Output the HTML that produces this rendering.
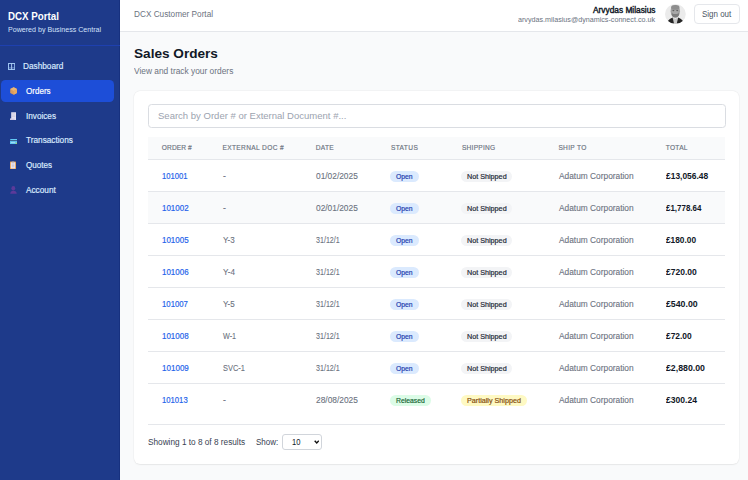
<!DOCTYPE html><html><head><meta charset="utf-8"><style>
*{margin:0;padding:0;box-sizing:border-box}
html,body{width:748px;height:480px;overflow:hidden;background:#f9fafb;font-family:"Liberation Sans",sans-serif;position:relative}
.t{position:absolute;white-space:nowrap;line-height:1;transform-origin:0 0}
.b{position:absolute}
</style></head><body>
<div class="b" style="left:0;top:0;width:120px;height:480px;background:#1e3a8a"></div>
<div class="b" style="left:119px;top:0;width:1px;height:480px;background:#17317f"></div>
<div class="b" style="left:0;top:45px;width:120px;height:1px;background:#1e40af"></div>
<div class="b" style="left:1px;top:79.9px;width:112.6px;height:21.8px;background:#1d4ed8;border-radius:4.5px"></div>
<div class="b" style="left:120px;top:0;width:628px;height:31px;background:#fff"></div>
<div class="b" style="left:120px;top:31px;width:628px;height:1px;background:#e5e7eb"></div>
<svg class="b" style="left:665px;top:4px" width="21" height="20" viewBox="0 0 21 20">
<defs><clipPath id="cc"><ellipse cx="10.4" cy="10" rx="10.4" ry="10"/></clipPath></defs>
<ellipse cx="10.4" cy="10" rx="10.4" ry="10" fill="#ebebeb"/>
<g clip-path="url(#cc)">
<path d="M3 20 L3.2 16.8 Q5 14.6 8 13.6 L10.4 15 L12.8 13.6 Q15.8 14.6 17.6 16.8 L17.8 20 Z" fill="#c9c9c9"/>
<path d="M2.6 17.2 Q4.6 14.6 7.6 13.6 L9 19.5 L5 19.5 Z" fill="#262626"/>
<path d="M18.2 17.2 Q16.2 14.6 13.2 13.6 L11.8 19.5 L15.8 19.5 Z" fill="#262626"/>
<ellipse cx="10.3" cy="7.2" rx="4.7" ry="6.3" fill="#a3a3a3"/>
<ellipse cx="10.3" cy="3.4" rx="4.2" ry="2.4" fill="#8e8e8e"/>
<ellipse cx="10.3" cy="10.6" rx="3.6" ry="2.8" fill="#7d7d7d"/>
<ellipse cx="10.3" cy="8.2" rx="3.3" ry="1.9" fill="#a8a8a8"/>
<ellipse cx="8.4" cy="6.6" rx="1" ry="0.6" fill="#5a5a5a"/>
<ellipse cx="12.2" cy="6.6" rx="1" ry="0.6" fill="#5a5a5a"/>
</g></svg>
<div class="b" style="left:694px;top:4px;width:46px;height:20px;border:1px solid #e5e7eb;border-radius:4px;background:#fff"></div>
<div class="b" style="left:134.4px;top:90.5px;width:604.6px;height:373.5px;background:#fff;border-radius:6px;box-shadow:0 0 0 0.5px rgba(0,0,0,0.04),0 0.5px 1.5px rgba(0,0,0,0.06)"></div>
<div class="b" style="left:148px;top:104px;width:578px;height:24px;border:1px solid #dadde2;border-radius:3.5px;background:#fff"></div>
<div class="b" style="left:148px;top:136.5px;width:576.8px;height:22.7px;background:#f9fafb"></div>
<div class="b" style="left:148px;top:159.2px;width:576.8px;height:1px;background:#e5e7eb"></div>
<div class="b" style="left:148px;top:191.20px;width:576.8px;height:1px;background:#e5e7eb"></div>
<div class="b" style="left:148px;top:192.20px;width:576.8px;height:31.00px;background:#f9fafb"></div>
<div class="b" style="left:148px;top:223.20px;width:576.8px;height:1px;background:#e5e7eb"></div>
<div class="b" style="left:148px;top:255.20px;width:576.8px;height:1px;background:#e5e7eb"></div>
<div class="b" style="left:148px;top:287.20px;width:576.8px;height:1px;background:#e5e7eb"></div>
<div class="b" style="left:148px;top:319.20px;width:576.8px;height:1px;background:#e5e7eb"></div>
<div class="b" style="left:148px;top:351.20px;width:576.8px;height:1px;background:#e5e7eb"></div>
<div class="b" style="left:148px;top:383.20px;width:576.8px;height:1px;background:#e5e7eb"></div>
<div class="b" style="left:148px;top:424.2px;width:576.8px;height:1px;background:#e5e7eb"></div>
<div class="b" style="left:390.0px;top:170.80px;width:28.90px;height:11.20px;background:#dbeafe;border-radius:6px"></div>
<div class="b" style="left:461.2px;top:170.80px;width:51.10px;height:11.20px;background:#f3f4f6;border-radius:6px"></div>
<div class="b" style="left:390.0px;top:202.80px;width:28.90px;height:11.20px;background:#dbeafe;border-radius:6px"></div>
<div class="b" style="left:461.2px;top:202.80px;width:51.10px;height:11.20px;background:#f3f4f6;border-radius:6px"></div>
<div class="b" style="left:390.0px;top:234.80px;width:28.90px;height:11.20px;background:#dbeafe;border-radius:6px"></div>
<div class="b" style="left:461.2px;top:234.80px;width:51.10px;height:11.20px;background:#f3f4f6;border-radius:6px"></div>
<div class="b" style="left:390.0px;top:266.80px;width:28.90px;height:11.20px;background:#dbeafe;border-radius:6px"></div>
<div class="b" style="left:461.2px;top:266.80px;width:51.10px;height:11.20px;background:#f3f4f6;border-radius:6px"></div>
<div class="b" style="left:390.0px;top:298.80px;width:28.90px;height:11.20px;background:#dbeafe;border-radius:6px"></div>
<div class="b" style="left:461.2px;top:298.80px;width:51.10px;height:11.20px;background:#f3f4f6;border-radius:6px"></div>
<div class="b" style="left:390.0px;top:330.80px;width:28.90px;height:11.20px;background:#dbeafe;border-radius:6px"></div>
<div class="b" style="left:461.2px;top:330.80px;width:51.10px;height:11.20px;background:#f3f4f6;border-radius:6px"></div>
<div class="b" style="left:390.0px;top:362.80px;width:28.90px;height:11.20px;background:#dbeafe;border-radius:6px"></div>
<div class="b" style="left:461.2px;top:362.80px;width:51.10px;height:11.20px;background:#f3f4f6;border-radius:6px"></div>
<div class="b" style="left:390.0px;top:394.80px;width:41.10px;height:11.20px;background:#dcfce7;border-radius:6px"></div>
<div class="b" style="left:461.2px;top:394.80px;width:65.80px;height:11.20px;background:#fef9c3;border-radius:6px"></div>
<div class="b" style="left:282px;top:434px;width:40px;height:16px;border:1px solid #d1d5db;border-radius:3px;background:#fff"></div>
<svg class="b" style="left:313.6px;top:439.6px" width="5.5" height="4.2" viewBox="0 0 5.5 4.2"><path d="M0.7 0.8 L2.75 3.0 L4.8 0.8" fill="none" stroke="#111" stroke-width="1.4"/></svg>
<svg class="b" style="left:7.9px;top:62.9px" width="7.2" height="7" viewBox="0 0 7.2 7">
<rect x="0.5" y="0.5" width="6.2" height="6" fill="none" stroke="#9cc3f0" stroke-width="1"/>
<line x1="3.6" y1="0.5" x2="3.6" y2="6.5" stroke="#b8d6f5" stroke-width="0.9"/>
<line x1="0.5" y1="4.9" x2="6.7" y2="4.9" stroke="#9cc3f0" stroke-width="0.6"/>
</svg>
<svg class="b" style="left:9.6px;top:87px" width="7.4" height="8" viewBox="0 0 7.4 8">
<path d="M3.7 0.3 L7.2 2.1 L7.2 6.0 L3.7 7.8 L0.2 6.0 L0.2 2.1 Z" fill="#d99a5b"/>
<path d="M0.2 2.1 L3.7 3.9 L7.2 2.1 L3.7 0.3 Z" fill="#eab677"/>
<path d="M3.7 3.9 L7.2 2.1 L7.2 6.0 L3.7 7.8 Z" fill="#e7a963"/>
</svg>
<svg class="b" style="left:9.9px;top:111.9px" width="6.3" height="8.3" viewBox="0 0 6.3 8.3">
<path d="M1.2 0.2 H6.1 V7.2 Q6.1 8.1 5.2 8.1 H0.2 V6.6 H1.2 Z" fill="#e6e3f2"/>
<path d="M0.2 6.6 H4.6 V8.1 H0.2 Z" fill="#cfc8e6"/>
<line x1="2" y1="1.8" x2="5.2" y2="1.8" stroke="#b9b4cc" stroke-width="0.4"/>
<line x1="2" y1="3.2" x2="5.2" y2="3.2" stroke="#b9b4cc" stroke-width="0.4"/>
<line x1="2" y1="4.6" x2="5.2" y2="4.6" stroke="#b9b4cc" stroke-width="0.4"/>
</svg>
<svg class="b" style="left:9.5px;top:138.8px" width="7.7" height="5.4" viewBox="0 0 7.7 5.4">
<rect x="0" y="0" width="7.7" height="5.4" rx="0.5" fill="#63c9f4"/>
<rect x="0" y="1.1" width="7.7" height="1.0" fill="#3a5b8a"/>
<rect x="1" y="3.1" width="4" height="0.6" fill="#c9e9f7"/>
<rect x="5.6" y="3.7" width="1.7" height="1.2" fill="#a6d36a"/>
</svg>
<svg class="b" style="left:10.1px;top:160.9px" width="6" height="8.2" viewBox="0 0 6 8.2">
<rect x="0" y="0.6" width="6" height="7.6" rx="0.6" fill="#eea048"/>
<rect x="0.8" y="1.3" width="4.4" height="6.2" fill="#ece8f5"/>
<rect x="1.8" y="0" width="2.4" height="1.3" fill="#8f8fa0"/>
<line x1="1.6" y1="3" x2="4.4" y2="3" stroke="#9a98ad" stroke-width="0.4"/>
<line x1="1.6" y1="4.4" x2="4.4" y2="4.4" stroke="#9a98ad" stroke-width="0.4"/>
<line x1="1.6" y1="5.8" x2="4.4" y2="5.8" stroke="#9a98ad" stroke-width="0.4"/>
</svg>
<svg class="b" style="left:9.9px;top:186.1px" width="7" height="7.7" viewBox="0 0 7 7.7">
<ellipse cx="3.3" cy="2.2" rx="1.9" ry="2.2" fill="#5c3a9a"/>
<path d="M0.2 7.7 Q0.4 5.0 3.3 4.8 Q6.6 5.0 6.8 7.7 Z" fill="#5c3a9a"/>
</svg>
<div class="t" style="left:8.39px;top:12.00px;font-size:10.0px;font-weight:bold;color:#ffffff;transform:scaleX(0.9742);">DCX Portal</div>
<div class="t" style="left:8.05px;top:26.00px;font-size:7.0px;color:#d3e2fb;transform:scaleX(1.0136);">Powered by Business Central</div>
<div class="t" style="left:22.66px;top:62.00px;font-size:8.3px;color:#dbeafe;transform:scaleX(0.9927);-webkit-text-stroke:0.18px currentColor;">Dashboard</div>
<div class="t" style="left:26.12px;top:87.00px;font-size:8.3px;color:#ffffff;transform:scaleX(0.9710);-webkit-text-stroke:0.18px currentColor;">Orders</div>
<div class="t" style="left:25.56px;top:112.00px;font-size:8.3px;color:#dbeafe;transform:scaleX(0.9851);-webkit-text-stroke:0.18px currentColor;">Invoices</div>
<div class="t" style="left:26.47px;top:136.00px;font-size:8.3px;color:#dbeafe;transform:scaleX(0.9932);-webkit-text-stroke:0.18px currentColor;">Transactions</div>
<div class="t" style="left:25.92px;top:161.00px;font-size:8.3px;color:#dbeafe;transform:scaleX(0.9766);-webkit-text-stroke:0.18px currentColor;">Quotes</div>
<div class="t" style="left:26.30px;top:186.00px;font-size:8.3px;color:#dbeafe;transform:scaleX(0.9927);-webkit-text-stroke:0.18px currentColor;">Account</div>
<div class="t" style="left:133.96px;top:10.00px;font-size:8.3px;color:#6b7280;transform:scaleX(0.9911);">DCX Customer Portal</div>
<div class="t" style="left:593.30px;top:6.00px;font-size:8.3px;color:#111827;transform:scaleX(1.0031);-webkit-text-stroke:0.4px currentColor;">Arvydas Milasius</div>
<div class="t" style="left:518.08px;top:16.00px;font-size:7.0px;color:#6b7280;transform:scaleX(1.0230);">arvydas.milasius@dynamics-connect.co.uk</div>
<div class="t" style="left:702.15px;top:10.00px;font-size:8.3px;color:#4b5563;transform:scaleX(0.9595);">Sign out</div>
<div class="t" style="left:134.19px;top:47.00px;font-size:13.4px;font-weight:bold;color:#111827;transform:scaleX(1.0155);">Sales Orders</div>
<div class="t" style="left:134.40px;top:67.00px;font-size:8.3px;color:#6b7280;transform:scaleX(1.0080);">View and track your orders</div>
<div class="t" style="left:157.50px;top:112.00px;font-size:9.3px;color:#9ca3af;transform:scaleX(1.0241);">Search by Order # or External Document #...</div>
<div class="t" style="left:161.84px;top:145.00px;font-size:6.6px;color:#6b7280;letter-spacing:0.105px;-webkit-text-stroke:0.15px currentColor;">ORDER #</div>
<div class="t" style="left:222.48px;top:145.00px;font-size:6.6px;color:#6b7280;letter-spacing:0.356px;-webkit-text-stroke:0.15px currentColor;">EXTERNAL DOC #</div>
<div class="t" style="left:315.68px;top:145.00px;font-size:6.6px;color:#6b7280;letter-spacing:0.293px;-webkit-text-stroke:0.15px currentColor;">DATE</div>
<div class="t" style="left:390.89px;top:145.00px;font-size:6.6px;color:#6b7280;letter-spacing:0.385px;-webkit-text-stroke:0.15px currentColor;">STATUS</div>
<div class="t" style="left:461.99px;top:145.00px;font-size:6.6px;color:#6b7280;letter-spacing:0.237px;-webkit-text-stroke:0.15px currentColor;">SHIPPING</div>
<div class="t" style="left:558.39px;top:145.00px;font-size:6.6px;color:#6b7280;letter-spacing:0.335px;-webkit-text-stroke:0.15px currentColor;">SHIP TO</div>
<div class="t" style="left:665.70px;top:145.00px;font-size:6.6px;color:#6b7280;letter-spacing:0.302px;-webkit-text-stroke:0.15px currentColor;">TOTAL</div>
<div class="t" style="left:161.72px;top:172.00px;font-size:8.3px;color:#2563eb;transform:scaleX(0.9202);-webkit-text-stroke:0.18px currentColor;">101001</div>
<div class="t" style="left:222.93px;top:172.00px;font-size:8.3px;color:#6b7280;transform:scaleX(1.0432);-webkit-text-stroke:0.1px currentColor;">-</div>
<div class="t" style="left:316.14px;top:172.00px;font-size:8.3px;color:#6b7280;transform:scaleX(1.0062);-webkit-text-stroke:0.1px currentColor;">01/02/2025</div>
<div class="t" style="left:558.60px;top:172.00px;font-size:8.3px;color:#6b7280;transform:scaleX(1.0053);-webkit-text-stroke:0.1px currentColor;">Adatum Corporation</div>
<div class="t" style="left:666.00px;top:172.00px;font-size:8.3px;font-weight:bold;color:#111827;transform:scaleX(1.0161);">£13,056.48</div>
<div class="t" style="left:396.48px;top:174.00px;font-size:6.6px;color:#1e40af;transform:scaleX(1.0281);-webkit-text-stroke:0.18px currentColor;">Open</div>
<div class="t" style="left:466.84px;top:174.00px;font-size:6.6px;color:#1f2937;transform:scaleX(1.0920);-webkit-text-stroke:0.18px currentColor;">Not Shipped</div>
<div class="t" style="left:161.70px;top:204.00px;font-size:8.3px;color:#2563eb;transform:scaleX(0.9612);-webkit-text-stroke:0.18px currentColor;">101002</div>
<div class="t" style="left:222.93px;top:204.00px;font-size:8.3px;color:#6b7280;transform:scaleX(1.0432);-webkit-text-stroke:0.1px currentColor;">-</div>
<div class="t" style="left:316.14px;top:204.00px;font-size:8.3px;color:#6b7280;transform:scaleX(1.0062);-webkit-text-stroke:0.1px currentColor;">02/01/2025</div>
<div class="t" style="left:558.60px;top:204.00px;font-size:8.3px;color:#6b7280;transform:scaleX(1.0053);-webkit-text-stroke:0.1px currentColor;">Adatum Corporation</div>
<div class="t" style="left:666.00px;top:204.00px;font-size:8.3px;font-weight:bold;color:#111827;transform:scaleX(0.9573);">£1,778.64</div>
<div class="t" style="left:396.48px;top:206.00px;font-size:6.6px;color:#1e40af;transform:scaleX(1.0281);-webkit-text-stroke:0.18px currentColor;">Open</div>
<div class="t" style="left:466.84px;top:206.00px;font-size:6.6px;color:#1f2937;transform:scaleX(1.0920);-webkit-text-stroke:0.18px currentColor;">Not Shipped</div>
<div class="t" style="left:161.70px;top:236.00px;font-size:8.3px;color:#2563eb;transform:scaleX(0.9612);-webkit-text-stroke:0.18px currentColor;">101005</div>
<div class="t" style="left:222.97px;top:236.00px;font-size:8.3px;color:#6b7280;transform:scaleX(0.9668);-webkit-text-stroke:0.1px currentColor;">Y-3</div>
<div class="t" style="left:316.48px;top:236.00px;font-size:8.3px;color:#6b7280;transform:scaleX(0.8562);-webkit-text-stroke:0.1px currentColor;">31/12/1</div>
<div class="t" style="left:558.60px;top:236.00px;font-size:8.3px;color:#6b7280;transform:scaleX(1.0053);-webkit-text-stroke:0.1px currentColor;">Adatum Corporation</div>
<div class="t" style="left:666.00px;top:236.00px;font-size:8.3px;font-weight:bold;color:#111827;transform:scaleX(1.0011);">£180.00</div>
<div class="t" style="left:396.48px;top:238.00px;font-size:6.6px;color:#1e40af;transform:scaleX(1.0281);-webkit-text-stroke:0.18px currentColor;">Open</div>
<div class="t" style="left:466.84px;top:238.00px;font-size:6.6px;color:#1f2937;transform:scaleX(1.0920);-webkit-text-stroke:0.18px currentColor;">Not Shipped</div>
<div class="t" style="left:161.70px;top:268.00px;font-size:8.3px;color:#2563eb;transform:scaleX(0.9612);-webkit-text-stroke:0.18px currentColor;">101006</div>
<div class="t" style="left:222.97px;top:268.00px;font-size:8.3px;color:#6b7280;transform:scaleX(0.9816);-webkit-text-stroke:0.1px currentColor;">Y-4</div>
<div class="t" style="left:316.48px;top:268.00px;font-size:8.3px;color:#6b7280;transform:scaleX(0.8562);-webkit-text-stroke:0.1px currentColor;">31/12/1</div>
<div class="t" style="left:558.60px;top:268.00px;font-size:8.3px;color:#6b7280;transform:scaleX(1.0053);-webkit-text-stroke:0.1px currentColor;">Adatum Corporation</div>
<div class="t" style="left:666.00px;top:268.00px;font-size:8.3px;font-weight:bold;color:#111827;transform:scaleX(1.0264);">£720.00</div>
<div class="t" style="left:396.48px;top:270.00px;font-size:6.6px;color:#1e40af;transform:scaleX(1.0281);-webkit-text-stroke:0.18px currentColor;">Open</div>
<div class="t" style="left:466.84px;top:270.00px;font-size:6.6px;color:#1f2937;transform:scaleX(1.0920);-webkit-text-stroke:0.18px currentColor;">Not Shipped</div>
<div class="t" style="left:161.71px;top:300.00px;font-size:8.3px;color:#2563eb;transform:scaleX(0.9351);-webkit-text-stroke:0.18px currentColor;">101007</div>
<div class="t" style="left:222.97px;top:300.00px;font-size:8.3px;color:#6b7280;transform:scaleX(0.9668);-webkit-text-stroke:0.1px currentColor;">Y-5</div>
<div class="t" style="left:316.48px;top:300.00px;font-size:8.3px;color:#6b7280;transform:scaleX(0.8562);-webkit-text-stroke:0.1px currentColor;">31/12/1</div>
<div class="t" style="left:558.60px;top:300.00px;font-size:8.3px;color:#6b7280;transform:scaleX(1.0053);-webkit-text-stroke:0.1px currentColor;">Adatum Corporation</div>
<div class="t" style="left:666.00px;top:300.00px;font-size:8.3px;font-weight:bold;color:#111827;transform:scaleX(1.0551);">£540.00</div>
<div class="t" style="left:396.48px;top:302.00px;font-size:6.6px;color:#1e40af;transform:scaleX(1.0281);-webkit-text-stroke:0.18px currentColor;">Open</div>
<div class="t" style="left:466.84px;top:302.00px;font-size:6.6px;color:#1f2937;transform:scaleX(1.0920);-webkit-text-stroke:0.18px currentColor;">Not Shipped</div>
<div class="t" style="left:161.70px;top:332.00px;font-size:8.3px;color:#2563eb;transform:scaleX(0.9612);-webkit-text-stroke:0.18px currentColor;">101008</div>
<div class="t" style="left:223.10px;top:332.00px;font-size:8.3px;color:#6b7280;transform:scaleX(0.8691);-webkit-text-stroke:0.1px currentColor;">W-1</div>
<div class="t" style="left:316.48px;top:332.00px;font-size:8.3px;color:#6b7280;transform:scaleX(0.8562);-webkit-text-stroke:0.1px currentColor;">31/12/1</div>
<div class="t" style="left:558.60px;top:332.00px;font-size:8.3px;color:#6b7280;transform:scaleX(1.0053);-webkit-text-stroke:0.1px currentColor;">Adatum Corporation</div>
<div class="t" style="left:666.00px;top:332.00px;font-size:8.3px;font-weight:bold;color:#111827;transform:scaleX(1.0140);">£72.00</div>
<div class="t" style="left:396.48px;top:334.00px;font-size:6.6px;color:#1e40af;transform:scaleX(1.0281);-webkit-text-stroke:0.18px currentColor;">Open</div>
<div class="t" style="left:466.84px;top:334.00px;font-size:6.6px;color:#1f2937;transform:scaleX(1.0920);-webkit-text-stroke:0.18px currentColor;">Not Shipped</div>
<div class="t" style="left:161.70px;top:364.00px;font-size:8.3px;color:#2563eb;transform:scaleX(0.9687);-webkit-text-stroke:0.18px currentColor;">101009</div>
<div class="t" style="left:222.87px;top:364.00px;font-size:8.3px;color:#6b7280;transform:scaleX(0.8931);-webkit-text-stroke:0.1px currentColor;">SVC-1</div>
<div class="t" style="left:316.48px;top:364.00px;font-size:8.3px;color:#6b7280;transform:scaleX(0.8562);-webkit-text-stroke:0.1px currentColor;">31/12/1</div>
<div class="t" style="left:558.60px;top:364.00px;font-size:8.3px;color:#6b7280;transform:scaleX(1.0053);-webkit-text-stroke:0.1px currentColor;">Adatum Corporation</div>
<div class="t" style="left:666.00px;top:364.00px;font-size:8.3px;font-weight:bold;color:#111827;transform:scaleX(1.0536);">£2,880.00</div>
<div class="t" style="left:396.48px;top:366.00px;font-size:6.6px;color:#1e40af;transform:scaleX(1.0281);-webkit-text-stroke:0.18px currentColor;">Open</div>
<div class="t" style="left:466.84px;top:366.00px;font-size:6.6px;color:#1f2937;transform:scaleX(1.0920);-webkit-text-stroke:0.18px currentColor;">Not Shipped</div>
<div class="t" style="left:161.72px;top:396.00px;font-size:8.3px;color:#2563eb;transform:scaleX(0.9277);-webkit-text-stroke:0.18px currentColor;">101013</div>
<div class="t" style="left:222.93px;top:396.00px;font-size:8.3px;color:#6b7280;transform:scaleX(1.0432);-webkit-text-stroke:0.1px currentColor;">-</div>
<div class="t" style="left:316.01px;top:396.00px;font-size:8.3px;color:#6b7280;transform:scaleX(1.0094);-webkit-text-stroke:0.1px currentColor;">28/08/2025</div>
<div class="t" style="left:558.60px;top:396.00px;font-size:8.3px;color:#6b7280;transform:scaleX(1.0053);-webkit-text-stroke:0.1px currentColor;">Adatum Corporation</div>
<div class="t" style="left:666.00px;top:396.00px;font-size:8.3px;font-weight:bold;color:#111827;transform:scaleX(1.0314);">£300.24</div>
<div class="t" style="left:396.07px;top:398.00px;font-size:6.6px;color:#166534;transform:scaleX(1.0334);-webkit-text-stroke:0.18px currentColor;">Released</div>
<div class="t" style="left:467.24px;top:398.00px;font-size:6.6px;color:#854d0e;transform:scaleX(1.0896);-webkit-text-stroke:0.18px currentColor;">Partially Shipped</div>
<div class="t" style="left:148.34px;top:438.00px;font-size:8.3px;color:#374151;transform:scaleX(0.9929);">Showing 1 to 8 of 8 results</div>
<div class="t" style="left:255.55px;top:438.00px;font-size:8.3px;color:#374151;transform:scaleX(0.9656);">Show:</div>
<div class="t" style="left:291.82px;top:438.00px;font-size:8.3px;color:#111827;transform:scaleX(0.9169);">10</div>
</body></html>
